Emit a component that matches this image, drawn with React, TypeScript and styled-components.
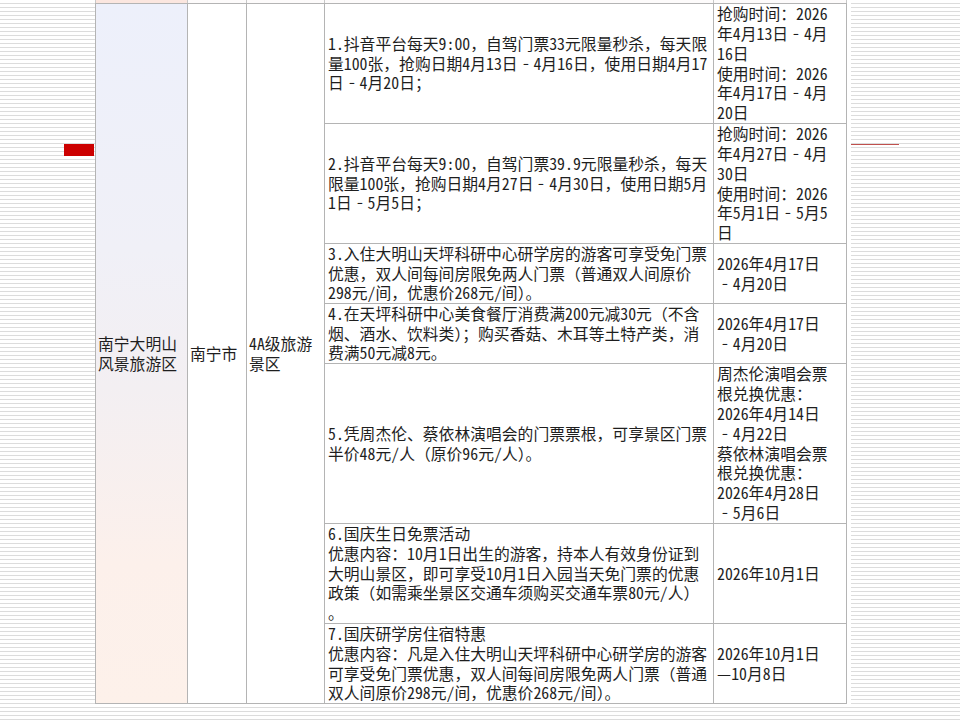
import React from "react";
import styled, { createGlobalStyle } from "styled-components";

const GlobalStyle = createGlobalStyle`
  html, body { margin: 0; padding: 0; background: #ffffff; }
  body {
    width: 960px;
    height: 720px;
    overflow: hidden;
    font-family: "Noto Sans CJK SC", "Noto Sans", sans-serif;
    color: #1e1e1e;
  }
`;

const stripes = `repeating-linear-gradient(to bottom, #ffffff 0px, #ffffff 3px, #dcdcdc 3px, #dcdcdc 4px)`;

const Page = styled.div`
  width: 960px;
  height: 720px;
  display: flex;
  flex-direction: column;
  background: ${stripes};
`;

const Main = styled.div`
  display: flex;
  height: 704px;
`;

const SideLeft = styled.div`
  width: 95px;
  display: flex;
  flex-direction: column;
  align-items: flex-end;
`;

const RedBar = styled.div`
  margin-top: 144px;
  width: 30px;
  height: 12px;
  background: #cc0000;
  margin-right: 1px;
`;

const SideRight = styled.div`
  flex: 1;
  display: flex;
  flex-direction: column;
  border-left: 4px solid #ffffff;
`;

const RedLine = styled.div`
  margin-top: 144px;
  width: 48px;
  height: 1px;
  background: #c0504d;
`;

const BottomGap = styled.div`
  height: 2px;
  background: #ffffff;
  margin-left: 95px;
  width: 752px;
`;

const TableWrap = styled.div`
  width: 752px;
  display: flex;
  flex-direction: column;
  background: #ffffff;
`;

const Remnant = styled.div`
  height: 3px;
  display: grid;
  grid-template-columns: 91px 58px 77px 388px 132px;
  column-gap: 1px;
  padding: 0 1px;
  background: #c8c8c8;
`;

const RemnantCell = styled.div<{ $pink?: boolean }>`
  background: ${(p) => (p.$pink ? "#fbe6df" : "#fdfbfb")};
`;

const Grid = styled.div`
  display: grid;
  grid-template-columns: 91px 58px 77px 388px 132px;
  grid-template-rows: 119px 119px 59px 59px 159px 99px 79px;
  gap: 1px;
  padding: 1px;
  background: #b4b4b4;
`;

const Cell = styled.div<{ $pad?: number }>`
  background: #ffffff;
  display: flex;
  flex-direction: column;
  justify-content: center;
  padding-left: ${(p) => p.$pad ?? 3}px;
  font-size: 15.8px;
  line-height: 19.8px;
  min-width: 0;
`;

const SpanCell = styled(Cell)<{ $col: number }>`
  grid-column: ${(p) => p.$col};
  grid-row: 1 / span 7;
`;

const NameCell = styled(SpanCell)`
  background: linear-gradient(
    to bottom,
    #edf0fb 0%,
    #f0f0f7 35%,
    #f3eff2 55%,
    #fcf0eb 80%,
    #fdf1ea 100%
  );
`;

const Line = styled.div`
  white-space: nowrap;
`;

const Half = styled.span`
  font-feature-settings: "hwid" 1;
`;

const DashBox = styled.span`
  display: inline-block;
  width: 1em;
  text-align: center;
`;

const DashGlyph = styled.span`
  display: inline-block;
  transform: scaleX(0.4);
`;

type Row = { detail: string[]; time: string[] };

const rows: Row[] = [
  {
    detail: [
      "1.抖音平台每天9:00，自驾门票33元限量秒杀，每天限",
      "量100张，抢购日期4月13日－4月16日，使用日期4月17",
      "日－4月20日；",
    ],
    time: [
      "抢购时间：2026",
      "年4月13日－4月",
      "16日",
      "使用时间：2026",
      "年4月17日－4月",
      "20日",
    ],
  },
  {
    detail: [
      "2.抖音平台每天9:00，自驾门票39.9元限量秒杀，每天",
      "限量100张，抢购日期4月27日－4月30日，使用日期5月",
      "1日－5月5日；",
    ],
    time: [
      "抢购时间：2026",
      "年4月27日－4月",
      "30日",
      "使用时间：2026",
      "年5月1日－5月5",
      "日",
    ],
  },
  {
    detail: [
      "3.入住大明山天坪科研中心研学房的游客可享受免门票",
      "优惠，双人间每间房限免两人门票（普通双人间原价",
      "298元/间，优惠价268元/间）。",
    ],
    time: ["2026年4月17日", "－4月20日"],
  },
  {
    detail: [
      "4.在天坪科研中心美食餐厅消费满200元减30元（不含",
      "烟、酒水、饮料类）；购买香菇、木耳等土特产类，消",
      "费满50元减8元。",
    ],
    time: ["2026年4月17日", "－4月20日"],
  },
  {
    detail: [
      "5.凭周杰伦、蔡依林演唱会的门票票根，可享景区门票",
      "半价48元/人（原价96元/人）。",
    ],
    time: [
      "周杰伦演唱会票",
      "根兑换优惠：",
      "2026年4月14日",
      "－4月22日",
      "蔡依林演唱会票",
      "根兑换优惠：",
      "2026年4月28日",
      "－5月6日",
    ],
  },
  {
    detail: [
      "6.国庆生日免票活动",
      "优惠内容：10月1日出生的游客，持本人有效身份证到",
      "大明山景区，即可享受10月1日入园当天免门票的优惠",
      "政策（如需乘坐景区交通车须购买交通车票80元/人）",
      "。",
    ],
    time: ["2026年10月1日"],
  },
  {
    detail: [
      "7.国庆研学房住宿特惠",
      "优惠内容：凡是入住大明山天坪科研中心研学房的游客",
      "可享受免门票优惠，双人间每间房限免两人门票（普通",
      "双人间原价298元/间，优惠价268元/间）。",
    ],
    time: ["2026年10月1日", "—10月8日"],
  },
];

const renderLine = (s: string) => {
  const tokens = s.split(/(－|[0-9A-Za-z.:/]+)/).filter((t) => t !== "");
  return tokens.map((t, i) => {
    if (t === "－")
      return (
        <DashBox key={i}>
          <DashGlyph>－</DashGlyph>
        </DashBox>
      );
    if (/^[0-9A-Za-z.:/]+$/.test(t)) return <Half key={i}>{t}</Half>;
    return <React.Fragment key={i}>{t}</React.Fragment>;
  });
};

const Lines: React.FC<{ lines: string[] }> = ({ lines }) => (
  <>
    {lines.map((l, i) => (
      <Line key={i}>{renderLine(l)}</Line>
    ))}
  </>
);

export default function App() {
  return (
    <>
      <GlobalStyle />
      <Page>
        <Main>
          <SideLeft>
            <RedBar />
          </SideLeft>
          <TableWrap>
            <Remnant>
              <RemnantCell $pink />
              <RemnantCell />
              <RemnantCell />
              <RemnantCell />
              <RemnantCell />
            </Remnant>
            <Grid>
              <NameCell $col={1} $pad={2}>
                <Lines lines={["南宁大明山", "风景旅游区"]} />
              </NameCell>
              <SpanCell $col={2} $pad={2}>
                <Lines lines={["南宁市"]} />
              </SpanCell>
              <SpanCell $col={3} $pad={2}>
                <Lines lines={["4A级旅游", "景区"]} />
              </SpanCell>
              {rows.map((r, i) => (
                <React.Fragment key={i}>
                  <Cell style={{ gridColumn: 4, gridRow: i + 1 }}>
                    <Lines lines={r.detail} />
                  </Cell>
                  <Cell style={{ gridColumn: 5, gridRow: i + 1 }}>
                    <Lines lines={r.time} />
                  </Cell>
                </React.Fragment>
              ))}
            </Grid>
          </TableWrap>
          <SideRight>
            <RedLine />
          </SideRight>
        </Main>
        <BottomGap />
      </Page>
    </>
  );
}
